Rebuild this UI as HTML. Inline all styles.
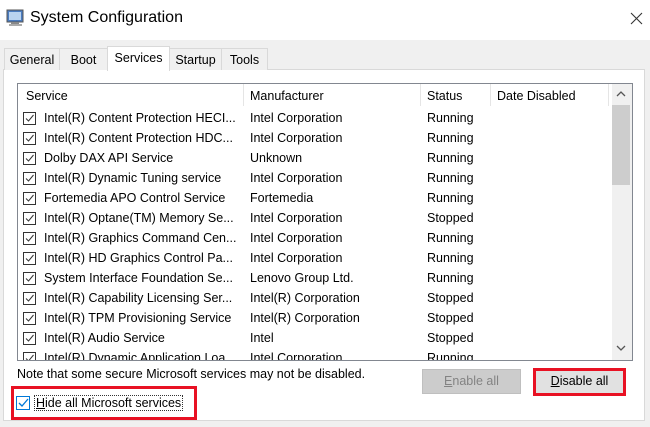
<!DOCTYPE html><html><head><style>
body{margin:0;width:650px;height:427px;background:#f0f0f0;font-family:"Liberation Sans",sans-serif;font-size:12.5px;color:#000;position:relative;overflow:hidden}
.a{position:absolute}
.title{left:0;top:0;width:650px;height:40px;background:#fff}
.tab{top:48px;height:22px;border:1px solid #d9d9d9;border-bottom:none;background:#f0f0f0;line-height:22px;text-align:center;box-sizing:border-box}
.panel{left:3px;top:69px;width:642px;height:352px;background:#fff;border:1px solid #d9d9d9;box-sizing:border-box}
.list{left:17px;top:83px;width:616px;height:278px;border:1px solid #828790;box-sizing:border-box;background:#fff;overflow:hidden}
.row{position:absolute;left:0;height:20px;line-height:20px;width:600px;white-space:nowrap}
.row span{position:absolute}
.cb{position:absolute;left:5px;top:4px;width:13px;height:13px;border:1px solid #333;box-sizing:border-box;background:#fff}
.cb svg{position:absolute;left:0;top:0}
.hd{position:absolute;top:1px;height:22px;line-height:22px}
.div{position:absolute;top:0;width:1px;height:22px;background:#e5e5e5}
.btn{top:369px;height:25px;box-sizing:border-box;text-align:center;line-height:23px}
</style></head><body>
<div class="a title"></div>
<svg class="a" style="left:6px;top:9px" width="20" height="18" viewBox="0 0 20 18"><rect x="1" y="1" width="16" height="12" fill="#4a7cc0" stroke="#555"/><rect x="3" y="3" width="12" height="8" fill="#b9d3f0"/><rect x="5" y="13" width="8" height="3" fill="#888"/><rect x="3" y="15" width="13" height="2" fill="#aaa"/></svg>
<div class="a" style="left:30px;top:9px;font-size:16px">System Configuration</div>
<svg class="a" style="left:630px;top:12px" width="13" height="13"><path d="M1 1L12 12M12 1L1 12" stroke="#333" stroke-width="1.1"/></svg>
<div class="a panel"></div>
<div class="a tab" style="left:4px;width:56px">General</div>
<div class="a tab" style="left:59px;width:49px">Boot</div>
<div class="a tab" style="left:169px;width:53px">Startup</div>
<div class="a tab" style="left:221px;width:47px">Tools</div>
<div class="a tab" style="left:107px;top:46px;height:25px;width:63px;background:#fff;line-height:22px">Services</div>
<div class="a list">
<div class="hd" style="left:8px">Service</div><div class="div" style="left:225px"></div>
<div class="hd" style="left:232px">Manufacturer</div><div class="div" style="left:402px"></div>
<div class="hd" style="left:409px">Status</div><div class="div" style="left:472px"></div>
<div class="hd" style="left:479px">Date Disabled</div><div class="div" style="left:590px"></div>
<div style="position:absolute;left:594px;top:0;width:20px;height:276px;background:#f0f0f0"></div>
<div style="position:absolute;left:594px;top:21px;width:18px;height:80px;background:#cdcdcd"></div>
<svg style="position:absolute;left:598px;top:6px" width="10" height="8"><path d="M1 6L5 2L9 6" stroke="#555" fill="none" stroke-width="1.3"/></svg>
<svg style="position:absolute;left:598px;top:260px" width="10" height="8"><path d="M1 2L5 6L9 2" stroke="#555" fill="none" stroke-width="1.3"/></svg>
<div id="rows"></div>
</div>
<div class="a" style="left:17px;top:367px">Note that some secure Microsoft services may not be disabled.</div>
<div class="a btn" style="left:422px;width:99px;background:#ccc;border:1px solid #bfbfbf;color:#838383"><u>E</u>nable all</div>
<div class="a btn" style="left:535px;width:89px;background:#e1e1e1;border:1px solid #adadad"><u>D</u>isable all</div>
<div class="a" style="left:533px;top:368px;width:93px;height:28px;border:3px solid #e81123;box-sizing:border-box"></div>
<div class="a" style="left:11px;top:386px;width:186px;height:34px;border:3px solid #e81123;box-sizing:border-box"></div>
<div class="a" style="left:16px;top:396px;width:14px;height:14px;border:1px solid #0078d7;box-sizing:border-box;background:#fff"><svg width="12" height="12" style="position:absolute;left:0;top:0"><path d="M2 6L5 9L11 2" stroke="#0078d7" fill="none" stroke-width="1.3"/></svg></div>
<div class="a" style="left:34px;top:395px;border:1px dotted #333;padding:0 1px;line-height:14px"><u>H</u>ide all Microsoft services</div>
<script>
var d=[["Intel(R) Content Protection HECI...","Intel Corporation","Running"],["Intel(R) Content Protection HDC...","Intel Corporation","Running"],["Dolby DAX API Service","Unknown","Running"],["Intel(R) Dynamic Tuning service","Intel Corporation","Running"],["Fortemedia APO Control Service","Fortemedia","Running"],["Intel(R) Optane(TM) Memory Se...","Intel Corporation","Stopped"],["Intel(R) Graphics Command Cen...","Intel Corporation","Running"],["Intel(R) HD Graphics Control Pa...","Intel Corporation","Running"],["System Interface Foundation Se...","Lenovo Group Ltd.","Running"],["Intel(R) Capability Licensing Ser...","Intel(R) Corporation","Stopped"],["Intel(R) TPM Provisioning Service","Intel(R) Corporation","Stopped"],["Intel(R) Audio Service","Intel","Stopped"],["Intel(R) Dynamic Application Loa...","Intel Corporation","Running"]];
var h="";d.forEach(function(r,i){h+='<div class="row" style="top:'+(24+i*20)+'px"><div class="cb"><svg width="11" height="11"><path d="M2 5.5L4.5 8L9.5 2" stroke="#333" fill="none" stroke-width="1"/></svg></div><span style="left:26px">'+r[0]+'</span><span style="left:232px">'+r[1]+'</span><span style="left:409px">'+r[2]+'</span></div>'});
document.getElementById("rows").innerHTML=h;
</script>
</body></html>
